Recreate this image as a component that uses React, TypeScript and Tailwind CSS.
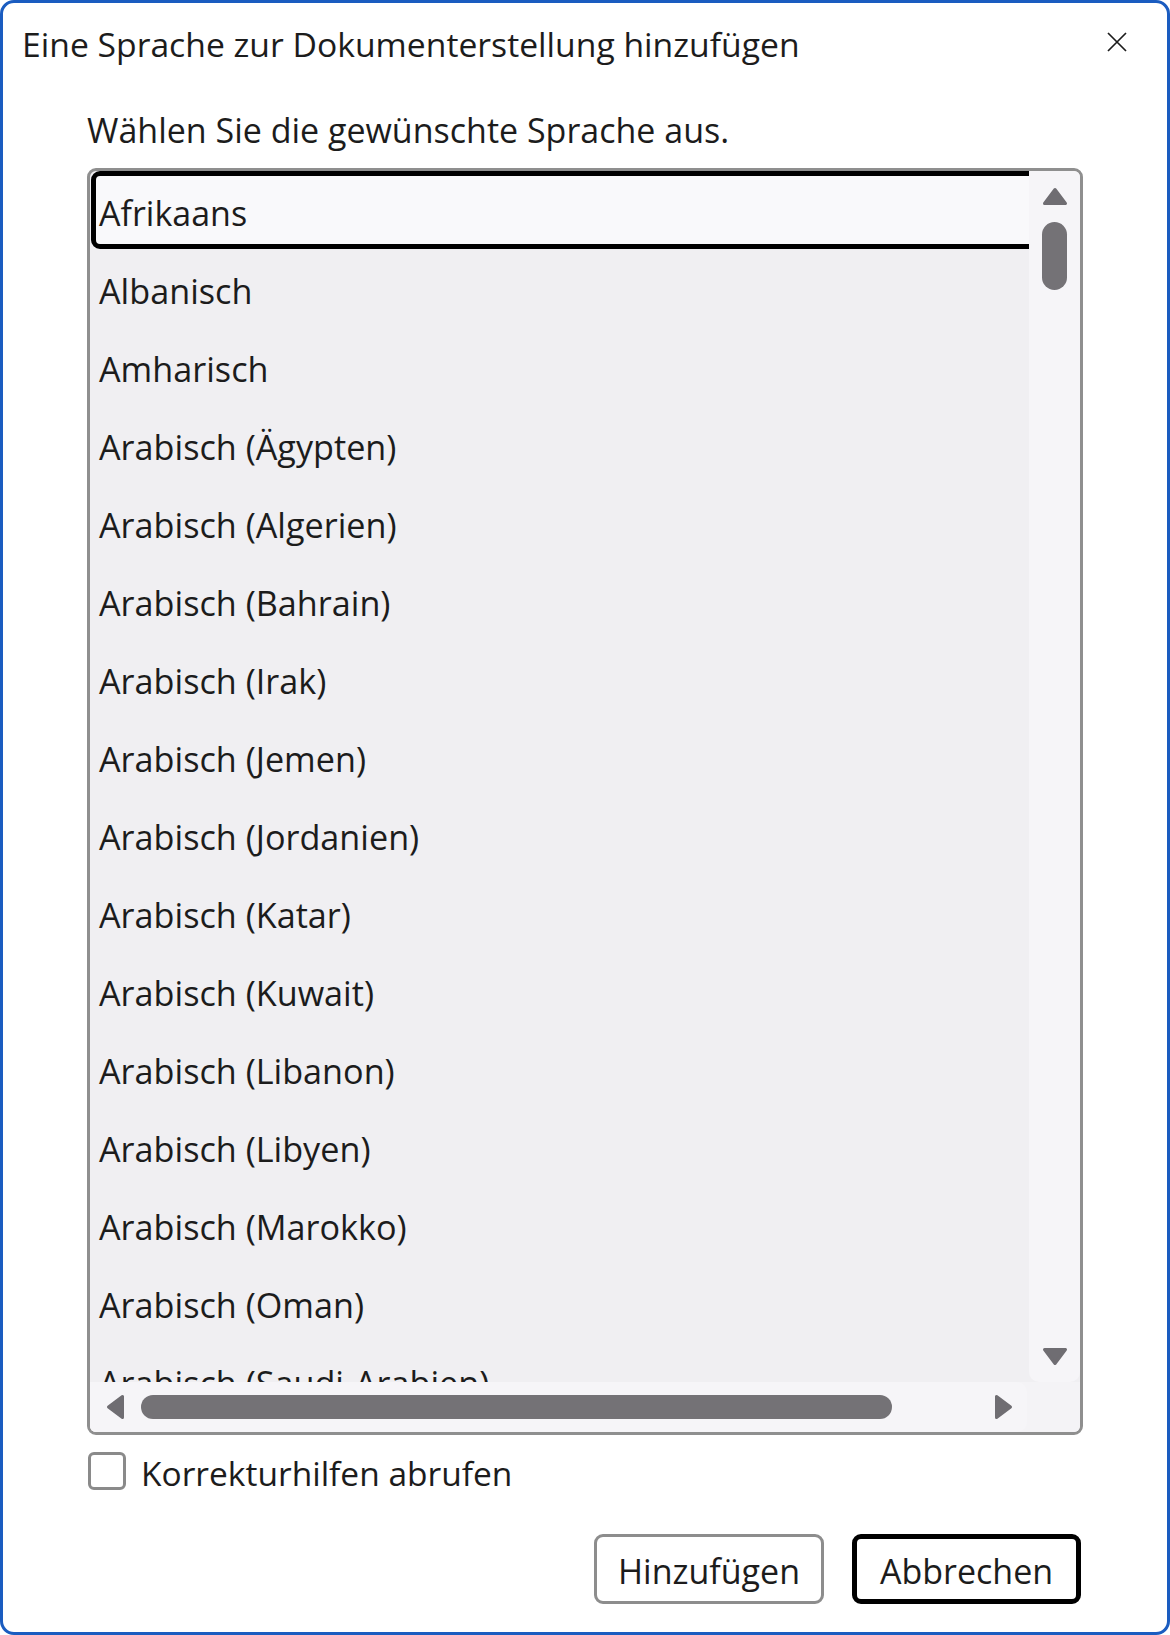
import React from "react";

const items = [
  "Afrikaans",
  "Albanisch",
  "Amharisch",
  "Arabisch (Ägypten)",
  "Arabisch (Algerien)",
  "Arabisch (Bahrain)",
  "Arabisch (Irak)",
  "Arabisch (Jemen)",
  "Arabisch (Jordanien)",
  "Arabisch (Katar)",
  "Arabisch (Kuwait)",
  "Arabisch (Libanon)",
  "Arabisch (Libyen)",
  "Arabisch (Marokko)",
  "Arabisch (Oman)",
  "Arabisch (Saudi-Arabien)",
];

function Tri({ dir }: { dir: "up" | "down" | "left" | "right" }) {
  const c = "#6f6d72";
  if (dir === "up")
    return (
      <svg width="26" height="19" viewBox="0 0 26 19">
        <polygon points="13,2.5 23.5,16.5 2.5,16.5" fill={c} stroke={c} strokeWidth="3" strokeLinejoin="round" />
      </svg>
    );
  if (dir === "down")
    return (
      <svg width="26" height="19" viewBox="0 0 26 19">
        <polygon points="13,16.5 23.5,2.5 2.5,2.5" fill={c} stroke={c} strokeWidth="3" strokeLinejoin="round" />
      </svg>
    );
  if (dir === "left")
    return (
      <svg width="19" height="26" viewBox="0 0 19 26">
        <polygon points="2.5,13 16.5,2.5 16.5,23.5" fill={c} stroke={c} strokeWidth="3" strokeLinejoin="round" />
      </svg>
    );
  return (
    <svg width="19" height="26" viewBox="0 0 19 26">
      <polygon points="16.5,13 2.5,2.5 2.5,23.5" fill={c} stroke={c} strokeWidth="3" strokeLinejoin="round" />
    </svg>
  );
}

export default function App() {
  return (
    <div
      className="w-[1170px] h-[1635px] bg-white border-[3px] border-[#1a5cc0] rounded-[14px] flex flex-col text-[#1c1c1c] overflow-hidden"
      style={{ fontFamily: '"Open Sans", "Noto Sans", sans-serif' }}
    >
      {/* Title row */}
      <div className="flex items-start justify-between pl-[19px] pr-[40px] pt-[19px]">
        <span className="text-[33.7px] leading-[44px]">Eine Sprache zur Dokumenterstellung hinzufügen</span>
        <svg className="mt-[10px]" width="20" height="20" viewBox="0 0 20 20">
          <path d="M1 1 L19 19 M19 1 L1 19" stroke="#1c1c1c" strokeWidth="1.7" fill="none" />
        </svg>
      </div>

      {/* Prompt */}
      <div className="pl-[84px] mt-[42px] text-[34px] leading-[44px]">Wählen Sie die gewünschte Sprache aus.</div>

      {/* Listbox */}
      <div className="ml-[84px] mt-[16px] w-[996px] h-[1267px] border-[3px] border-[#8f8f8f] rounded-[9px] bg-[#f0eff2] overflow-hidden flex flex-col">
        <div className="flex h-[1211px]">
          <div className="w-[939px] overflow-hidden pl-[1px] flex flex-col">
            {items.map((it, i) =>
              i === 0 ? (
                <div
                  key={it}
                  className="shrink-0 w-[980px] h-[78px] border-[5px] border-black rounded-[9px] bg-[#f9f9fb] pl-[3px] pt-[4px] text-[34px] leading-[66px] whitespace-nowrap"
                >
                  {it}
                </div>
              ) : (
                <div key={it} className="shrink-0 h-[78px] pl-[8px] pt-[6px] text-[34.2px] leading-[72px] whitespace-nowrap">
                  {it}
                </div>
              )
            )}
          </div>
          <div className="w-[51px] bg-[#f6f5f8] rounded-b-[10px] flex flex-col items-center pt-[16px] pb-[16px]">
            <Tri dir="up" />
            <div className="mt-[16px] w-[25px] h-[68px] rounded-full bg-[#747276]" />
            <div className="flex-1" />
            <Tri dir="down" />
          </div>
        </div>
        <div className="flex h-[50px] bg-[#f4f3f6]">
          <div className="w-[937px] bg-[#f6f5f8] rounded-r-[10px] flex items-center pl-[16px]">
            <Tri dir="left" />
            <div className="ml-[16px] w-[751px] h-[24px] rounded-full bg-[#747276]" />
            <div className="flex-1" />
            <Tri dir="right" />
            <div className="w-[14px]" />
          </div>
          <div className="flex-1" />
        </div>
      </div>

      {/* Checkbox */}
      <div className="flex items-start ml-[85px] mt-[17px]">
        <div className="w-[38px] h-[38px] border-[3px] border-[#8a8a8a] rounded-[6px] bg-white shrink-0" />
        <span className="ml-[15px] -mt-[1px] text-[33.5px] leading-[44px]">Korrekturhilfen abrufen</span>
      </div>

      {/* Buttons */}
      <div className="flex justify-end gap-[28px] pr-[86px] mt-[39px]">
        <button className="w-[230px] h-[70px] border-[3px] border-[#8d8d8d] rounded-[9px] bg-white text-[34px] leading-none pt-[3px] flex items-center justify-center">
          Hinzufügen
        </button>
        <button className="w-[229px] h-[70px] border-[5px] border-black rounded-[9px] bg-white text-[34px] leading-none pt-[3px] flex items-center justify-center">
          Abbrechen
        </button>
      </div>
    </div>
  );
}
